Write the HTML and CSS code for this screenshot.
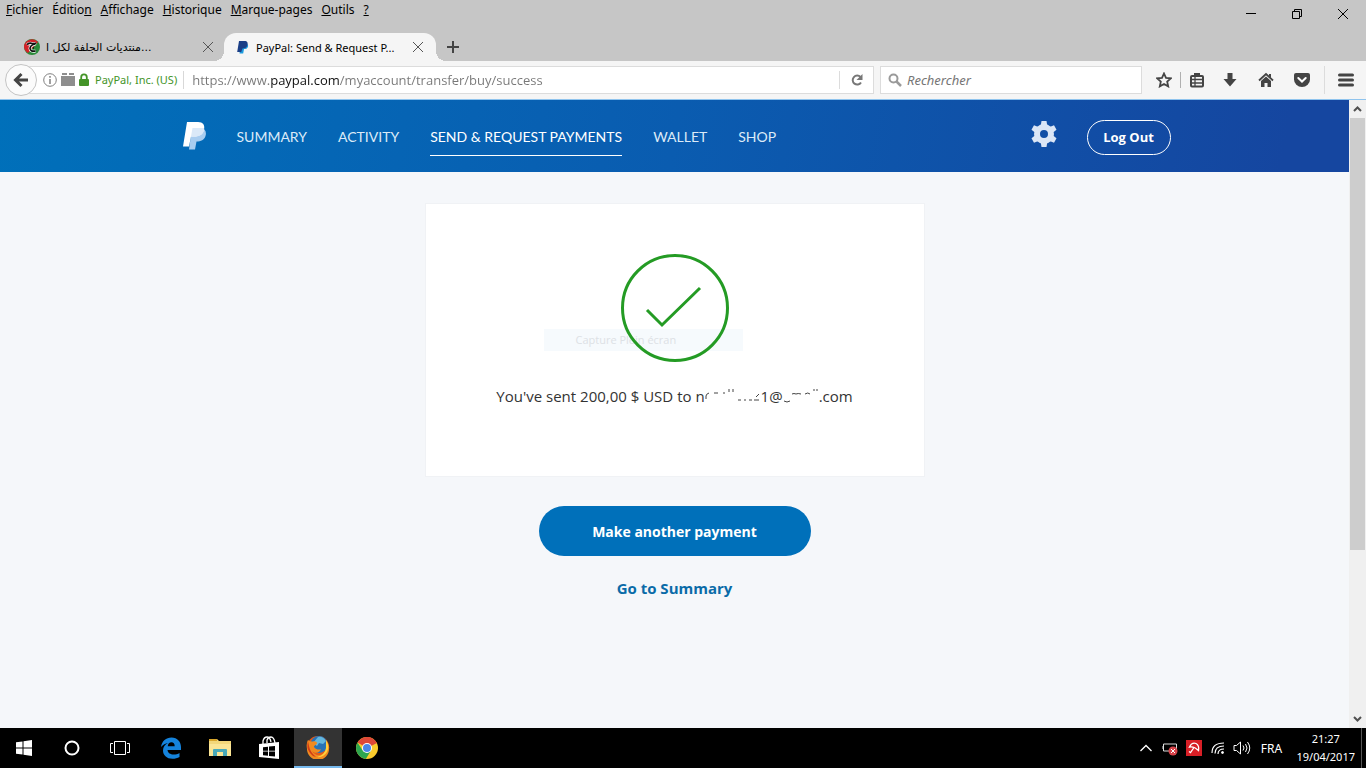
FILE: index.html
```html
<!DOCTYPE html>
<html lang="fr">
<head>
    <meta charset="UTF-8">
    <meta name="viewport" content="width=device-width, initial-scale=1.0">
    <title>PayPal: Send &amp; Request Payments</title>
    <link rel="stylesheet" href="styles.css">
</head>
<body>

    <!-- Title bar: menus, window buttons, tabs -->
    <div class="titlebar">
        <div class="menu-row">
            <nav class="menus">
                <button><u>F</u>ichier</button>
                <button>Éditio<u>n</u></button>
                <button><u>A</u>ffichage</button>
                <button><u>H</u>istorique</button>
                <button><u>M</u>arque-pages</button>
                <button><u>O</u>utils</button>
                <button><u>?</u></button>
            </nav>
            <div class="window-buttons">
                <button aria-label="Réduire">
                    <svg width="12" height="12" viewBox="0 0 12 12"><path d="M1 5.5h10" stroke="#000"/></svg>
                </button>
                <button aria-label="Restaurer">
                    <svg width="12" height="12" viewBox="0 0 12 12" fill="none" stroke="#000"><path d="M1.5 3.500h7v7h-7zM3.500 3.500v-2h7v7h-2"/></svg>
                </button>
                <button aria-label="Fermer">
                    <svg width="12" height="12" viewBox="0 0 12 12"><path d="M1 1l10 10M11 1L1 11" stroke="#000"/></svg>
                </button>
            </div>
        </div>
        <div class="tabs">
            <div class="tab">
                <svg width="16" height="16" viewBox="0 0 16 16">
                    <circle cx="8" cy="8" r="8" fill="#2a8a3a"/>
                    <path d="M0 8a8 8 0 0 1 14-5L4 14a8 8 0 0 1-4-6z" fill="#d3222a"/>
                    <path d="M3 5.500q3-2 5-1 2 .5 4-.5M11.500 5Q6 6 6 9.500 6.500 13 11.500 12" fill="none" stroke="#fff" stroke-width="3"/>
                    <path d="M3 5.500q3-2 5-1 2 .5 4-.5M11.500 5Q6 6 6 9.500 6.500 13 11.500 12M9 9h1" fill="none" stroke="#111" stroke-width="1.700"/>
                </svg>
                <span class="tab-title arabic">منتديات الجلفة لكل ا...</span>
                <button class="tab-close" aria-label="Fermer l'onglet">
                    <svg width="12" height="12" viewBox="0 0 12 12"><path d="M1 1l10 10M11 1L1 11" stroke="#555"/></svg>
                </button>
            </div>
            <div class="tab active">
                <svg width="14" height="14" viewBox="0 0 14 14">
                    <path d="M4.500 3.500h6c2.500 1 2 5-1 5.500H8l-.8 4.500H3.500z" fill="#1c9bde"/>
                    <path d="M3 1h5.500c3 0 3.500 2 3 4C11 7.500 9 8.500 6.500 8.500L5.200 12H1.200z" fill="#1b3f87"/>
                </svg>
                <span class="tab-title">PayPal: Send &amp; Request P...</span>
                <button class="tab-close" aria-label="Fermer l'onglet">
                    <svg width="12" height="12" viewBox="0 0 12 12"><path d="M1 1l10 10M11 1L1 11" stroke="#555"/></svg>
                </button>
            </div>
            <button class="new-tab" aria-label="Nouvel onglet">
                <svg width="14" height="14" viewBox="0 0 14 14"><path d="M7 1v12M1 7h12" stroke="#444" stroke-width="2"/></svg>
            </button>
        </div>
    </div>

    <!-- Navigation toolbar -->
    <div class="toolbar">
        <button class="back" aria-label="Précédent">
            <svg width="16" height="16" viewBox="0 0 16 16"><path d="M15 8H3M8.500 2L2.500 8l6 6" fill="none" stroke="#444" stroke-width="3"/></svg>
        </button>
        <div class="url-bar">
            <svg width="14" height="14" viewBox="0 0 14 14"><circle cx="7" cy="7" r="6.300" fill="none" stroke="#808080"/><path d="M7 6v5M7 3v1.700" stroke="#808080" stroke-width="1.500"/></svg>
            <svg width="14" height="14" viewBox="0 0 14 14"><path d="M0 3h14v10H0zM1 0h5v2H1zM8 0h5v2H8z" fill="#8e8e8e"/></svg>
            <svg width="10" height="14" viewBox="0 0 10 14"><path d="M2.200 7V4.200a2.800 2.800 0 0 1 5.600 0V7" fill="none" stroke="#449428" stroke-width="1.800"/><rect y="6" width="10" height="7" rx="1" fill="#449428"/></svg>
            <span class="identity">PayPal, Inc. (US)</span>
            <input type="text" class="url" aria-label="Adresse" value="https://www.paypal.com/myaccount/transfer/buy/success">
            <button class="reload" aria-label="Actualiser">
                <svg width="14" height="14" viewBox="0 0 14 14"><path d="M11 9.500A4.500 4.500 0 1 1 10.500 4" fill="none" stroke="#777" stroke-width="2"/><path d="M12.500 1v6h-6z" fill="#777"/></svg>
            </button>
        </div>
        <div class="search-bar">
            <svg width="14" height="14" viewBox="0 0 14 14" fill="none" stroke="#9a9a9a"><circle cx="5.500" cy="5.500" r="4" stroke-width="2"/><path d="M8.500 8.500l4.500 4.500" stroke-width="2.500"/></svg>
            <input type="text" class="search" aria-label="Rechercher" placeholder="Rechercher">
        </div>
        <div class="tools">
            <button class="star" aria-label="Marquer cette page">
                <svg width="16" height="16" viewBox="0 0 16 16"><path d="M8 1.500l2 4.400 4.800.5-3.600 3.200 1 4.800L8 12l-4.200 2.400 1-4.800L1.200 6.400 6 5.900z" fill="none" stroke="#444" stroke-width="1.800"/></svg>
            </button>
            <button class="divided" aria-label="Marque-pages">
                <svg width="16" height="16" viewBox="0 0 16 16" fill="none" stroke="#444"><rect x="2" y="4" width="12" height="10.500" rx="1" stroke-width="2"/><path d="M5 2.500h6" stroke-width="3"/><path d="M3 7.500h10M3 11h10M6 5v9" stroke-width="1.300"/></svg>
            </button>
            <button aria-label="Téléchargements">
                <svg width="16" height="16" viewBox="0 0 16 16"><path d="M5.500 1h5v6h4L8 14.500 1.500 7h4z" fill="#444"/></svg>
            </button>
            <button aria-label="Accueil">
                <svg width="16" height="16" viewBox="0 0 16 16"><path d="M1 8.500L8 2l7 6.500" fill="none" stroke="#444" stroke-width="1.800"/><path d="M3 9l5-4.600L13 9v6H9.500v-4h-3v4H3zM11 2h2v4l-2-2z" fill="#444"/></svg>
            </button>
            <button aria-label="Pocket">
                <svg width="16" height="16" viewBox="0 0 16 16"><path d="M2 1h12q2 0 2 2v4.500a8 7.500 0 0 1-16 0V3q0-2 2-2z" fill="#444"/><path d="M4.300 6L8 9.500 11.700 6" fill="none" stroke="#fff" stroke-width="2" stroke-linecap="round"/></svg>
            </button>
            <button class="hamburger" aria-label="Menu">
                <svg width="16" height="16" viewBox="0 0 16 16"><path d="M1.500 3h13M1.500 8h13M1.500 13h13" stroke="#444" stroke-width="3" stroke-linecap="round"/></svg>
            </button>
        </div>
    </div>

    <!-- Page -->
    <div class="viewport">
        <div class="page">
            <header class="header">
                <div class="header-inner">
                    <a href="#" class="logo" aria-label="PayPal">
                        <svg width="24" height="28" viewBox="0 0 24 28">
                            <path d="M9 6h11q4 3 2.500 8c-1.300 4-4.500 5.500-9 5.500L12 27.500H6z" fill="#a9cdf0"/>
                            <path d="M4 0h11c5 0 7 3 6 7.500-1.200 5-4.500 7-10 7H8L6 24.500H0z" fill="#fff"/>
                            <path d="M9.500 6H21c.5 6-4 8.800-10 8.500H8z" fill="#dbe9f8"/>
                        </svg>
                    </a>
                    <nav class="nav">
                        <a href="#">SUMMARY</a>
                        <a href="#">ACTIVITY</a>
                        <a href="#" class="current">SEND &amp; REQUEST PAYMENTS</a>
                        <a href="#">WALLET</a>
                        <a href="#">SHOP</a>
                    </nav>
                    <button class="settings" aria-label="Settings">
                        <svg width="26" height="26" viewBox="0 0 26 26">
                            <g fill="#dbe6f6">
                                <path id="tooth" d="M10.500 0h5l1 6h-7z"/>
                                <use href="#tooth" transform="rotate(60 13 13)"/>
                                <use href="#tooth" transform="rotate(120 13 13)"/>
                                <use href="#tooth" transform="rotate(180 13 13)"/>
                                <use href="#tooth" transform="rotate(240 13 13)"/>
                                <use href="#tooth" transform="rotate(300 13 13)"/>
                            </g>
                            <circle cx="13" cy="13" r="7" fill="none" stroke="#dbe6f6" stroke-width="6"/>
                        </svg>
                    </button>
                    <button class="logout">Log Out</button>
                </div>
            </header>

            <main class="content">
                <section class="card">
                    <div class="menu-ghost">Capture Plein écran</div>
                    <svg class="check" width="108" height="108" viewBox="0 0 108 108" fill="none" stroke="#249b24" stroke-width="3">
                        <circle cx="54" cy="54" r="52.500"/>
                        <path d="M26 56l15 15 38-37"/>
                    </svg>
                    <p class="message">
                        <span>You've sent 200,00 $ USD to n</span>
                        <svg class="erased" width="56" height="16" viewBox="0 0 56 16" fill="none" stroke="#444">
                            <path d="M1 11V8q0-2 3-3M9 5h4M18 5h2M24 1v3M28 1v3M33 12h3M39 12h2M44 12h3M49 12h5M51 9l3-3"/>
                        </svg>
                        <span>1@</span>
                        <svg class="erased" width="36" height="16" viewBox="0 0 36 16" fill="none" stroke="#444">
                            <path d="M1 13q3 2 6 0M9 6q2-1 4 0 2-1 5 0M22 6q3-2 5 0M31 1v2M34 1v2"/>
                        </svg>
                        <span>.com</span>
                    </p>
                </section>
                <button class="primary">Make another payment</button>
                <a href="#" class="summary-link">Go to Summary</a>
            </main>
        </div>
        <div class="scrollbar">
            <svg width="9" height="6" viewBox="0 0 9 6"><path d="M1 5l3.500-3.500L8 5" fill="none" stroke="#505050" stroke-width="2"/></svg>
            <div class="track"><div class="thumb"></div></div>
            <svg width="9" height="6" viewBox="0 0 9 6"><path d="M1 1l3.500 3.500L8 1" fill="none" stroke="#505050" stroke-width="2"/></svg>
        </div>
    </div>

    <!-- Taskbar -->
    <footer class="taskbar">
        <div class="launchers">
            <button aria-label="Démarrer">
                <svg width="16" height="16" viewBox="0 0 16 16"><path d="M0 2.300l6.500-.9v6.100H0zM7.500 1.200L16 0v7.500H7.500zM0 8.500h6.500v6.100L0 13.700zM7.500 8.500H16V16l-8.500-1.200z" fill="#fff"/></svg>
            </button>
            <button aria-label="Cortana">
                <svg width="16" height="16" viewBox="0 0 16 16"><circle cx="8" cy="8" r="6.500" fill="none" stroke="#fff" stroke-width="2"/></svg>
            </button>
            <button aria-label="Affichage des tâches">
                <svg width="20" height="16" viewBox="0 0 20 16" fill="none" stroke="#fff"><path d="M4.500 1.500h11v13h-11zM3 3.500H.5v9H3M17 3.500h2.500v9H17"/></svg>
            </button>
        </div>
        <div class="apps">
            <button aria-label="Edge">
                <svg width="20" height="22" viewBox="0 0 20 22"><path d="M0 10C1 4 5 .5 10.500.5 16.500.5 20 5 20 10v3H6.500c.3 3 3 4.500 6 4.500 2.300 0 4.500-.6 6-1.600V20c-2 1.200-4.500 1.800-7 1.800C5.500 21.800 2 18 2 13.500 2 10 4 7.500 7 6 4.500 6.500 2 7.500 0 10zM6.700 9.200h7c0-2.500-1.200-4-3.300-4-2 0-3.300 1.500-3.700 4z" fill="#1583dc"/></svg>
            </button>
            <button aria-label="Explorateur de fichiers">
                <svg width="22" height="20" viewBox="0 0 22 20"><path d="M0 1h8l2 2h12v15H0z" fill="#f3d77a"/><path d="M0 1h8v2H0z" fill="#d9a62b"/><path d="M0 6h22v12H0z" fill="#fbe595"/><path d="M4 18v-6q0-1 1-1h12q1 0 1 1v6h-4v-4H8v4z" fill="#49a9b9"/></svg>
            </button>
            <button aria-label="Store">
                <svg width="22" height="24" viewBox="0 0 22 24"><path d="M1 8l20-2v17L1 21z" fill="#fff"/><path d="M5 8V5q1-4 4-4t4 5M9 7V4q1-3 4-3t4 6" fill="none" stroke="#fff" stroke-width="1.300"/><path d="M5 11.200l5-.5v4H5zM11 10.600l6-.6v4.700h-6zM5 15.500h5v4.300l-5-.5zM11 15.500h6v5l-6-.6z" fill="#000"/></svg>
            </button>
            <button class="running" aria-label="Firefox">
                <svg width="24" height="24" viewBox="0 0 24 24">
                    <circle cx="12" cy="12" r="11" fill="#e65a17"/>
                    <circle cx="13" cy="9.500" r="8.500" fill="#2773b6"/>
                    <path d="M12 2q5-1 8 4l-3 3-4-1-2 3-4-3z" fill="#63b7de"/>
                    <path d="M2 5q2 2 5 1.500c2-.5 4 .5 4 1.500 0 2-3 2-3 4 2 3 6 3 7 2-1 4-6 5-9 2 4 7 14 5 15-5l-1-5q4 4 3 8a11 11 0 0 1-22 0Q0 8 2 5z" fill="#f18b20"/>
                    <path d="M20 5q4 6 1 12-4 6-10 5 8-2 9-9z" fill="#ffd23c"/>
                    <path d="M2 6q-2 7 2 12 2 3 6 4-6-5-7-11z" fill="#d13b16"/>
                </svg>
            </button>
            <button aria-label="Chrome">
                <svg width="22" height="22" viewBox="0 0 22 22">
                    <circle cx="11" cy="11" r="11" fill="#fbcb2c"/>
                    <path d="M11 11L1.500 5.500a11 11 0 0 1 19 0L21 6z" fill="#de4838"/>
                    <path d="M1.500 5.500a11 11 0 0 0 8.300 16.400L15 13.500l-8.500-.2z" fill="#2da64f"/>
                    <path d="M11 6h9.800q-5-6-9.800-6z" fill="#de4838"/>
                    <circle cx="11" cy="11" r="5" fill="#fff"/>
                    <circle cx="11" cy="11" r="4" fill="#4a86e8"/>
                </svg>
            </button>
        </div>
        <div class="tray">
            <button aria-label="Icônes cachées">
                <svg width="14" height="8" viewBox="0 0 14 8"><path d="M1.500 7L7 1.500 12.500 7" fill="none" stroke="#fff" stroke-width="1.300"/></svg>
            </button>
            <button aria-label="Batterie">
                <svg width="16" height="16" viewBox="0 0 16 16"><path d="M1.500 4v7h13V4zM0 6v3" fill="none" stroke="#ddd"/><circle cx="11" cy="11" r="4.500" fill="#d8434a"/><path d="M9 9l4 4M13 9l-4 4" stroke="#fff"/></svg>
            </button>
            <button aria-label="Avira">
                <svg width="16" height="16" viewBox="0 0 16 16"><path d="M0 0h16v16H0z" fill="#d81f26"/><path d="M3.500 7Q6 2 10 3.500q3.500 2 2.500 7Q8 6 3.500 7z" fill="none" stroke="#fff" stroke-width="1.300"/><path d="M8 7.500l-3.500 5-1.500-1" fill="none" stroke="#fff" stroke-width="1.300"/></svg>
            </button>
            <button aria-label="Réseau">
                <svg width="14" height="14" viewBox="0 0 14 14" fill="none" stroke="#fff"><path d="M1 12Q1 2 13 2M4 12.500Q4 5 13 5M7 13q0-5 6-5" stroke-width="1.200"/><circle cx="11.500" cy="11.500" r="1" fill="#fff"/></svg>
            </button>
            <button aria-label="Volume">
                <svg width="18" height="14" viewBox="0 0 18 14" fill="none" stroke="#fff"><path d="M1 4.500h2.500l4-3.500v12l-4-3.500H1zM10 4.500q2 2.500 0 5M12.500 3q3 4 0 8M14.500 1q4.500 6 0 12"/></svg>
            </button>
            <button class="lang">FRA</button>
            <div class="clock">
                <time>21:27</time>
                <time>19/04/2017</time>
            </div>
        </div>
    </footer>

</body>
</html>
```
FILE: styles.css
```css
* {
    box-sizing: border-box;
}

body {
    margin: 0;
    height: 100vh;
    display: flex;
    flex-direction: column;
    overflow: hidden;
    font-family: "Noto Sans", "Open Sans", sans-serif;
    font-size: 12px;
    color: #000;
}

button {
    display: flex;
    align-items: center;
    justify-content: center;
    padding: 0;
    border: none;
    background: none;
    font: inherit;
    color: inherit;
    cursor: pointer;
}

input {
    min-width: 0;
    padding: 0;
    border: none;
    outline: none;
    background: none;
    font: inherit;
}

svg {
    display: block;
    flex-shrink: 0;
}

/* Title bar */
.titlebar {
    background-color: #c6c6c6;
}

.menu-row {
    display: flex;
    justify-content: space-between;
    height: 33px;
}

.menus {
    display: flex;
    align-items: flex-start;
    gap: 9px;
    padding: 2px 6px;
    line-height: 16px;
}

.window-buttons {
    display: flex;
    height: 28px;
}

.window-buttons button {
    width: 46px;
}

/* Tabs */
.tabs {
    display: flex;
    height: 28px;
    padding-left: 10px;
}

.tab {
    position: relative;
    display: flex;
    align-items: center;
    width: 212px;
    padding: 0 8px 0 14px;
    gap: 6px;
}

.tab.active {
    background-color: #f5f5f5;
    border-radius: 12px 12px 0 0;
    margin-left: 2px;
    padding: 0 12px;
}

/* Flared feet of the active tab */
.tab.active::before,
.tab.active::after {
    content: "";
    position: absolute;
    bottom: 0;
    width: 10px;
    height: 10px;
}

.tab.active::before {
    right: 100%;
    background: radial-gradient(circle at 0 0, transparent 10px, #f5f5f5 10px);
}

.tab.active::after {
    left: 100%;
    background: radial-gradient(circle at 100% 0, transparent 10px, #f5f5f5 10px);
}

.tab-title {
    flex: 1;
    font-size: 11px;
    white-space: nowrap;
}

.arabic {
    font-family: "DejaVu Sans", sans-serif;
}

.new-tab {
    width: 34px;
}

/* Toolbar */
.toolbar {
    display: flex;
    align-items: center;
    height: 39px;
    padding-left: 5px;
    background-color: #f5f5f5;
    border-bottom: 1px solid #8fc4ee;
}

.back {
    width: 32px;
    height: 32px;
    border: 1px solid #c4c4c4;
    border-radius: 50%;
    background-color: #fbfbfb;
    z-index: 1;
}

.url-bar,
.search-bar {
    display: flex;
    align-items: center;
    min-width: 0;
    height: 28px;
    background-color: #fff;
    border: 1px solid #dcdcdc;
}

.url-bar {
    flex: 1;
    margin-left: -10px;
    padding-left: 15px;
    gap: 4px;
}

.identity {
    margin-left: 2px;
    padding-right: 6px;
    border-right: 1px solid #d8d8d8;
    color: #449428;
    font-size: 11px;
    line-height: 18px;
    white-space: nowrap;
}

/* The host name is darker than the rest of the address */
.url {
    flex: 1;
    margin-left: 4px;
    font-family: "Open Sans", sans-serif;
    font-size: 13px;
    color: transparent;
    background: linear-gradient(90deg, #777 78px, #111 78px, #111 148px, #777 148px);
    -webkit-background-clip: text;
    background-clip: text;
}

.reload {
    width: 34px;
    height: 18px;
    border-left: 1px solid #dcdcdc;
}

.search-bar {
    flex: 0 1 262px;
    margin-left: 6px;
    padding: 0 7px;
    gap: 5px;
}

.search {
    flex: 1;
    font-size: 13px;
    font-style: italic;
}

.search::placeholder {
    color: #757575;
}

.tools {
    display: flex;
    align-items: center;
    padding-left: 6px;
}

.tools button {
    width: 36px;
    height: 28px;
}

.tools .star {
    width: 32px;
}

.tools .divided {
    width: 32px;
    height: 16px;
    border-left: 1px solid #b0b0b0;
}

.tools .hamburger {
    width: 42px;
    margin-left: 4px;
    border-left: 1px solid #dcdcdc;
}

/* Page */
.viewport {
    flex: 1;
    display: flex;
    min-height: 0;
}

.page {
    flex: 1;
    background-color: #f5f7fa;
    font-family: "Open Sans", sans-serif;
}

.header {
    padding: 2px 32px 0 36px;
    background: linear-gradient(100deg, #0070ba, #0a5cb0 50%, #1546a0 95%);
}

.header-inner {
    display: flex;
    align-items: center;
    max-width: 988px;
    height: 70px;
    margin: 0 auto;
    color: #fff;
}

.logo {
    padding-bottom: 2px;
}

.nav {
    display: flex;
    flex: 1;
    gap: 31px;
    margin-left: 30px;
    font-family: Lato, sans-serif;
    font-size: 14px;
}

.nav a {
    padding: 8px 0;
    line-height: 20px;
    border-bottom: 1px solid transparent;
    color: #dcebf8;
    text-decoration: none;
    white-space: nowrap;
}

.nav .current {
    color: #fff;
    border-color: #fff;
}

.settings {
    padding-bottom: 6px;
}

.logout {
    width: 84px;
    height: 35px;
    margin-left: 30px;
    border: 1px solid #fff;
    border-radius: 18px;
    font-size: 13px;
    font-weight: bold;
}

.content {
    display: flex;
    flex-direction: column;
    align-items: center;
    padding: 31px 16px;
}

.card {
    position: relative;
    display: flex;
    flex-direction: column;
    align-items: center;
    width: 100%;
    max-width: 500px;
    padding: 50px 16px 68px;
    background-color: #fff;
    border: 1px solid #f0f2f5;
}

/* Faded menu entry, caught while closing */
.menu-ghost {
    position: absolute;
    top: 125px;
    left: 118px;
    width: 199px;
    height: 22px;
    padding-left: 32px;
    background-color: #f6fafd;
    font-size: 11px;
    line-height: 22px;
    color: #dde1e5;
}

.check {
    position: relative;
}

.message {
    display: flex;
    align-items: center;
    margin: 22px 0 0;
    font-size: 15px;
    line-height: 24px;
    color: #333;
    white-space: nowrap;
}

.primary {
    width: 272px;
    height: 50px;
    margin-top: 29px;
    border-radius: 25px;
    background-color: #0070ba;
    color: #fff;
    font-size: 14px;
    font-weight: bold;
}

.summary-link {
    margin-top: 20px;
    font-size: 15px;
    line-height: 24px;
    font-weight: bold;
    color: #0a6ba8;
    text-decoration: none;
}

/* Scrollbar */
.scrollbar {
    display: flex;
    flex-direction: column;
    align-items: center;
    gap: 6px;
    width: 17px;
    padding: 6px 0;
    background-color: #f0f0f0;
}

.track {
    flex: 1;
    width: 100%;
    padding: 0 1px;
}

.thumb {
    height: 73%;
    background-color: #cdcdcd;
}

/* Taskbar */
.taskbar {
    display: flex;
    height: 40px;
    background-color: #000;
    color: #fff;
}

.launchers,
.apps,
.tray {
    display: flex;
}

.launchers button,
.apps button {
    width: 48px;
}

.apps {
    gap: 1px;
    margin-left: 3px;
}

.apps .running {
    background-color: #333;
    border-bottom: 2px solid #76b9ed;
}

.tray {
    margin-left: auto;
    padding-right: 4px;
}

.tray button {
    width: 24px;
}

.tray .lang {
    width: 34px;
}

.clock {
    display: flex;
    flex-direction: column;
    align-items: center;
    justify-content: center;
    padding: 0 6px 0 8px;
    border-right: 1px solid #555;
    font-size: 11px;
    line-height: 18px;
}
```
